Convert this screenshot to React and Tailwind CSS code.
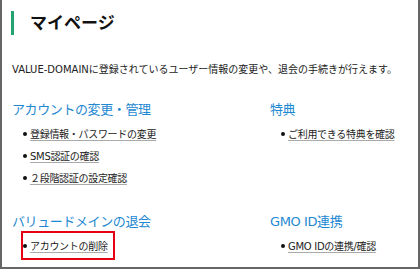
import React from "react";

const font = {
  fontFamily: '"DejaVu Sans", "Noto Sans CJK JP", sans-serif',
};

function Item({ children, boxed }) {
  return (
    <li className="relative flex items-center h-[22px]">
      <span className="w-[4px] h-[4px] rounded-full bg-[#111] mr-[3px]" />
      <a className="text-[10px] text-[#222] underline decoration-[#aaa] underline-offset-2 tracking-[-0.3px]">
        {children}
      </a>
      {boxed && (
        <span className="absolute left-[-2px] top-[-4px] w-[94px] h-[29px] border-2 border-[#e60012]" />
      )}
    </li>
  );
}

function Section({ title, items, boxed, className }) {
  return (
    <div className={className}>
      <h2 className="text-[13px] leading-[18px] text-[#1e88d2] tracking-[-0.4px]">
        {title}
      </h2>
      <ul className="pl-[11px] mt-[4px]">
        {items.map((t, i) => (
          <Item key={i} boxed={boxed && i === 0}>
            {t}
          </Item>
        ))}
      </ul>
    </div>
  );
}

export default function App() {
  return (
    <div
      className="w-[420px] h-[269px] bg-white border-x-2 border-b-2 border-[#666] text-[#222]"
      style={font}
    >
      {/* Title */}
      <div className="flex items-center pl-[9px] pt-[11px]">
        <div className="w-[3px] h-[24px] bg-[#22a36f]" />
        <h1 className="ml-[16px] text-[17px] font-bold leading-[24px] text-[#111]">
          マイページ
        </h1>
      </div>

      <p className="ml-[10px] mt-[27px] text-[10px] leading-[16px]">
        VALUE-DOMAINに登録されているユーザー情報の変更や、退会の手続きが行えます。
      </p>

      <div className="grid grid-cols-[258px_1fr] pl-[10px] mt-[23px]">
        <Section
          title="アカウントの変更・管理"
          items={["登録情報・パスワードの変更", "SMS認証の確認", "２段階認証の設定確認"]}
        />
        <Section title="特典" items={["ご利用できる特典を確認"]} />
        <Section
          className="mt-[24px]"
          title="バリュードメインの退会"
          items={["アカウントの削除"]}
          boxed
        />
        <Section
          className="mt-[24px]"
          title="GMO ID連携"
          items={["GMO IDの連携/確認"]}
        />
      </div>
    </div>
  );
}
